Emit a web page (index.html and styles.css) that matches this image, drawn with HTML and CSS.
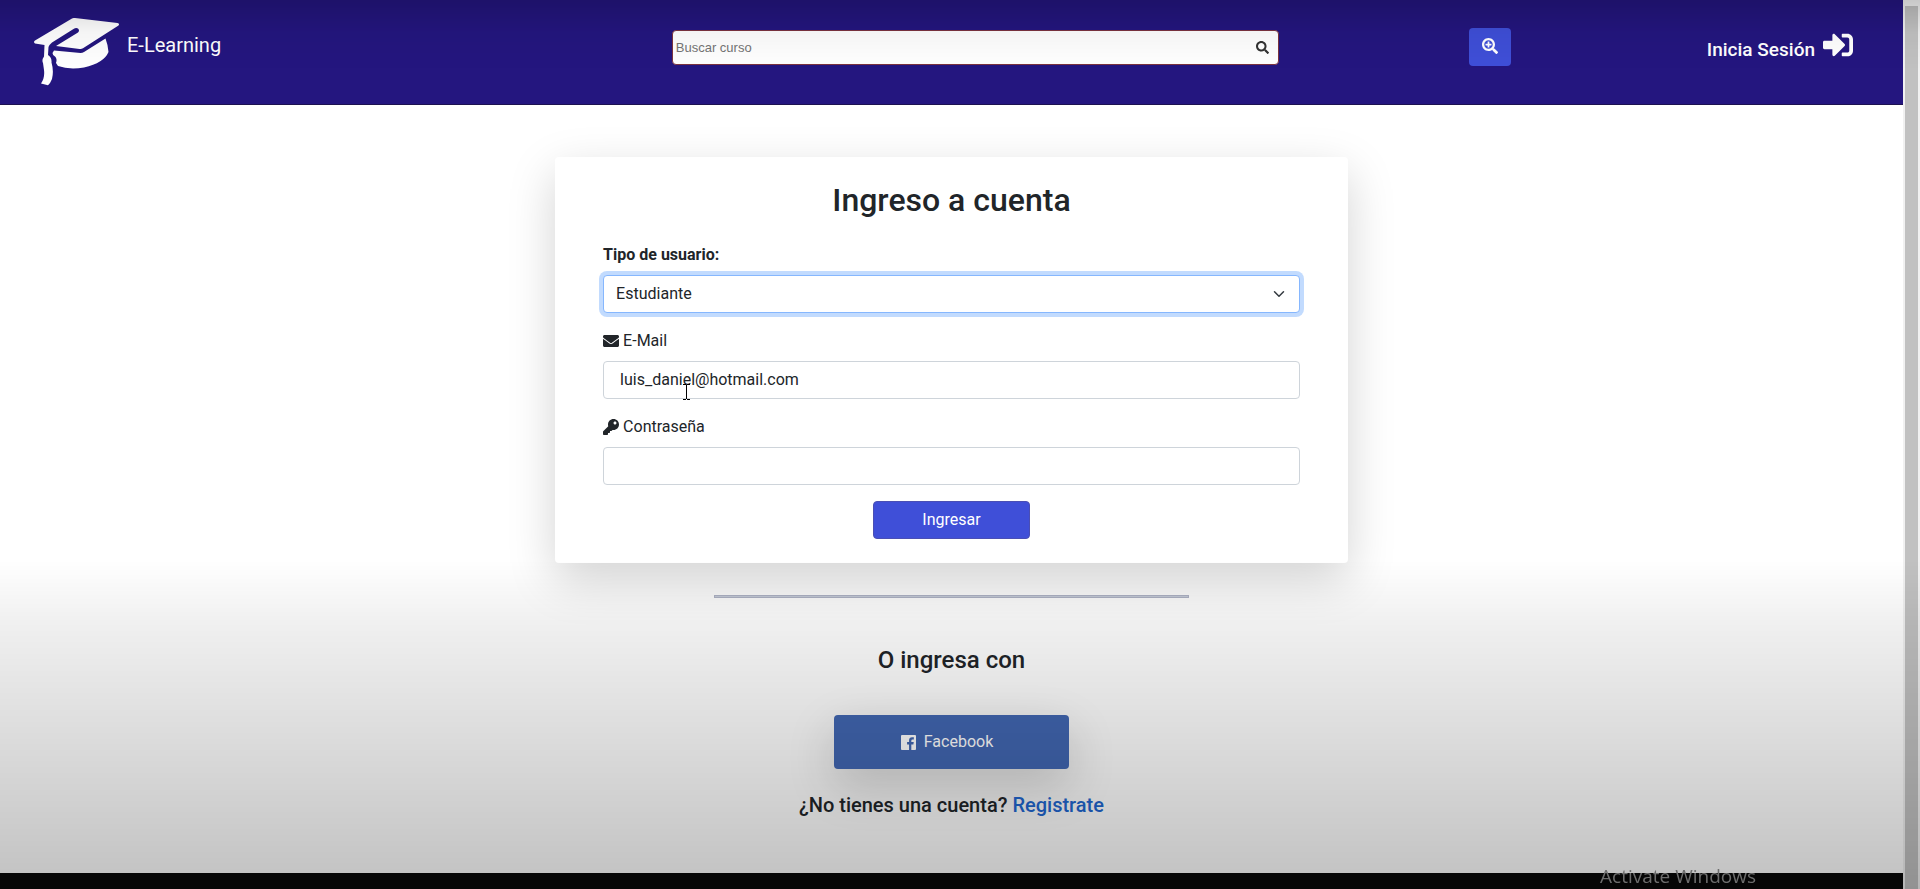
FILE: index.html
```html
<!DOCTYPE html>
<html lang="es">
<head>
<meta charset="utf-8">
<meta name="viewport" content="width=device-width, initial-scale=1">
<title>E-Learning</title>
<link rel="stylesheet" href="styles.css">
</head>
<body>
<div class="page">
  <header class="topbar">
    <a class="brand" href="#">
      <svg class="brand-logo" viewBox="0 0 86 68" aria-hidden="true">
        <path fill="#fff" d="M38 0.500Q39.500-.2 41 0L83.500 5Q86 5.600 84.500 7.500L49 30.300Q47.500 31.300 45.500 31L22 28 44 14.500Q46 12.500 44 10.500 42 9.500 39.500 11L18 24.500Q15.500 26.500 14.500 29L14 37Q18 39.500 17.500 44.500 20 53 18 61Q16.500 65 14 67.200L7 65.500Q11 60 10 52L9 45Q7.500 42 10 38.500L10.500 27 1 25.500Q-1 24 1 22.500Z"/>
        <path fill="#fff" d="M20 32.500L46.500 35Q48.500 35 50 34L71.500 20.500Q74 27 74.500 34 70 45 50 49.500 35 52 24 48L22 45Q23.500 41 21 38.500 18.500 37 18.500 35Z"/>
      </svg>
      <span>E-Learning</span>
    </a>
    <form class="search" role="search">
      <input class="search-input" type="search" placeholder="Buscar curso" aria-label="Buscar curso">
      <svg class="search-icon" viewBox="0 0 512 512" aria-hidden="true"><path fill="#333" d="M505 442.700L405.300 343c-4.500-4.500-10.600-7-17-7H372c27.600-35.300 44-79.700 44-128C416 93.100 322.900 0 208 0S0 93.100 0 208s93.100 208 208 208c48.300 0 92.700-16.400 128-44v16.300c0 6.400 2.500 12.500 7 17l99.700 99.700c9.400 9.400 24.600 9.400 33.900 0l28.300-28.300c9.400-9.400 9.400-24.600.1-34zM208 336c-70.700 0-128-57.200-128-128 0-70.700 57.200-128 128-128 70.700 0 128 57.200 128 128 0 70.700-57.200 128-128 128z"/></svg>
    </form>
    <button class="zoom-button" type="button" aria-label="Buscar">
      <svg viewBox="0 0 512 512" aria-hidden="true"><path fill="#fff" d="M304 192v32c0 6.600-5.400 12-12 12h-56v56c0 6.600-5.400 12-12 12h-32c-6.600 0-12-5.400-12-12v-56h-56c-6.600 0-12-5.400-12-12v-32c0-6.600 5.400-12 12-12h56v-56c0-6.600 5.400-12 12-12h32c6.600 0 12 5.400 12 12v56h56c6.600 0 12 5.400 12 12zm201 284.700L476.700 505c-9.400 9.400-24.600 9.400-33.900 0L343 405.300c-4.500-4.500-7-10.600-7-17V372c-35.300 27.600-79.700 44-128 44C93.100 416 0 322.900 0 208S93.100 0 208 0s208 93.100 208 208c0 48.300-16.400 92.700-44 128h16.300c6.400 0 12.500 2.500 17 7l99.700 99.700c9.300 9.400 9.300 24.600 0 34zM344 208c0-75.200-60.800-136-136-136S72 132.800 72 208s60.800 136 136 136 136-60.800 136-136z"/></svg>
    </button>
    <a class="login-link" href="#">
      <span>Inicia Sesión</span>
      <svg viewBox="0 0 512 512" aria-hidden="true"><path fill="#fff" d="M416 448h-84c-6.600 0-12-5.400-12-12v-40c0-6.600 5.400-12 12-12h84c17.700 0 32-14.300 32-32V160c0-17.700-14.300-32-32-32h-84c-6.600 0-12-5.400-12-12V76c0-6.600 5.400-12 12-12h84c53 0 96 43 96 96v192c0 53-43 96-96 96zm-47-209L201 71c-15-15-41-4.500-41 17v96H24c-13.300 0-24 10.700-24 24v96c0 13.300 10.700 24 24 24h136v96c0 21.500 26 32 41 17l168-168c9.300-9.400 9.300-24.600 0-34z"/></svg>
    </a>
  </header>

  <main class="content">
    <form class="card">
      <h1 class="card-title">Ingreso a cuenta</h1>
      <div class="field">
        <label class="label-strong" for="tipo">Tipo de usuario:</label>
        <div class="control">
          <select class="select" id="tipo"><option>Estudiante</option><option>Profesor</option></select>
          <svg class="chevron" viewBox="0 0 16 16" aria-hidden="true"><path fill="none" stroke="#343a40" stroke-width="2" stroke-linecap="round" stroke-linejoin="round" d="M2 5l6 6 6-6"/></svg>
        </div>
      </div>
      <div class="field">
        <label for="email"><svg class="label-icon" viewBox="0 0 512 512" aria-hidden="true"><path fill="#212529" d="M502.300 190.800c3.900-3.100 9.700-.2 9.700 4.700V400c0 26.500-21.500 48-48 48H48c-26.500 0-48-21.500-48-48V195.600c0-5 5.700-7.800 9.700-4.700 22.400 17.400 52.100 39.500 154.100 113.600 21.100 15.400 56.700 47.800 92.200 47.600 35.700.3 72-32.800 92.300-47.600 102-74.100 131.600-96.300 154-113.700zM256 320c23.200.4 56.600-29.200 73.400-41.400 132.700-96.300 142.800-104.700 173.400-128.700 5.800-4.500 9.200-11.500 9.200-18.900v-19c0-26.500-21.500-48-48-48H48c-26.500 0-48 21.500-48 48v19c0 7.400 3.400 14.300 9.200 18.900 30.600 23.900 40.700 32.400 173.400 128.700 16.800 12.200 50.200 41.800 73.400 41.400z"/></svg>E-Mail</label>
        <div class="control">
          <input class="input" id="email" type="email" value="luis_daniel@hotmail.com">
          <svg class="pointer" viewBox="0 0 7 16" aria-hidden="true"><path fill="#000" d="M0 0h3v1H0zM4 0h3v1H4zM3 1h1v14H3zM0 15h3v1H0zM4 15h3v1H4z"/></svg>
        </div>
      </div>
      <div class="field">
        <label for="clave"><svg class="label-icon" viewBox="0 0 512 512" aria-hidden="true"><path fill="#212529" d="M512 176.001C512 273.203 433.202 352 336 352c-11.220 0-22.190-1.062-32.827-3.069l-24.012 27.014A23.999 23.999 0 0 1 261.223 384H224v40c0 13.255-10.745 24-24 24h-40v40c0 13.255-10.745 24-24 24H24c-13.255 0-24-10.745-24-24v-78.059c0-6.365 2.529-12.470 7.029-16.971l161.802-161.802C163.108 213.814 160 195.271 160 176 160 78.798 238.797.001 335.999 0 433.488-.001 512 78.511 512 176.001zM336 128c0 26.510 21.490 48 48 48s48-21.490 48-48-21.490-48-48-48-48 21.490-48 48z"/></svg>Contraseña</label>
        <input class="input" id="clave" type="password">
      </div>
      <button class="submit" type="submit">Ingresar</button>
    </form>

    <hr class="divider">

    <section class="social">
      <h2 class="social-title">O ingresa con</h2>
      <button class="facebook" type="button">
        <svg viewBox="0 0 16 16" aria-hidden="true"><path fill="#fff" d="M1 0h14q1 0 1 1v14q0 1-1 1h-4V10h2.200l.4-2.500H11V6q0-1.300 1.300-1.300h1.400V2.500Q12.900 2.300 11.800 2.300 8.600 2.300 8.600 5.500v2H6.500V10h2.100v6H1Q0 16 0 15V1Q0 0 1 0z"/></svg>
        <span>Facebook</span>
      </button>
      <p class="signup">¿No tienes una cuenta? <a href="#">Registrate</a></p>
    </section>
  </main>

  <footer class="footer"></footer>
</div>
<div class="scrollbar" aria-hidden="true"><div class="scrollbar-thumb"></div></div>
<div class="shade" aria-hidden="true"></div>
<div class="watermark">Activate Windows</div>
</body>
</html>
```

FILE: styles.css
```css
* {
  box-sizing: border-box;
}

body {
  margin: 0;
  display: flex;
  min-height: 100vh;
  background: #fff;
  color: #212529;
  font: 400 16px/24px Roboto, "Liberation Sans", sans-serif;
}

input,
select,
button {
  font: inherit;
  color: inherit;
  margin: 0;
}

a {
  text-decoration: none;
}

svg {
  display: block;
  flex: none;
}

.page {
  flex: 1;
  min-width: 0;
  display: flex;
  flex-direction: column;
}

/* Top bar */
.topbar {
  display: grid;
  grid-template-columns: 353fr 319fr 122fr 206fr;
  align-items: start;
  padding-bottom: 18px;
  background: #24167f;
  border-bottom: 1px solid #1d1250;
  color: #fff;
}

.brand {
  display: flex;
  gap: 7px;
  padding: 18px 0 0 34px;
  color: #fff;
  font-size: 20px;
  line-height: 55px;
}

.brand-logo {
  width: 86px;
  height: 68px;
}

.search {
  position: relative;
  padding-top: 30px;
}

.search-input {
  display: block;
  width: 100%;
  height: 35px;
  padding: 1px 3px;
  border: 1px solid #7c3440;
  border-radius: 4px;
  background: #fff;
  appearance: none;
  font: 13px "Liberation Sans", Arial, sans-serif;
}

.search-input::placeholder {
  color: #757575;
}

.search-icon {
  position: absolute;
  top: 41px;
  right: 10px;
  width: 13px;
  height: 13px;
}

.zoom-button {
  justify-self: end;
  margin: 28px 0 0;
  padding: 10px 13px 12px;
  border: 0;
  border-radius: 4px;
  background: #3f4fd8;
}

.zoom-button svg {
  width: 16px;
  height: 16px;
}

.login-link {
  display: flex;
  justify-content: flex-end;
  gap: 8px;
  padding: 30px 50px 0 0;
  color: #fff;
  font-size: 19px;
  font-weight: 500;
  line-height: 40px;
}

.login-link svg {
  width: 30px;
  height: 30px;
}

/* Login card */
.content {
  flex: 1;
  display: flex;
  flex-direction: column;
  align-items: center;
  padding-top: 52px;
}

.card {
  display: flex;
  flex-direction: column;
  gap: 16px;
  width: 41.66%;
  padding: 24px 48px;
  border-radius: 4px;
  background: #fff;
  box-shadow: 0 16px 48px rgba(0, 0, 0, 0.175);
}

.card-title {
  margin: 0 0 8px;
  font-size: 32px;
  font-weight: 500;
  line-height: 38px;
  text-align: center;
}

.field {
  display: flex;
  flex-direction: column;
  gap: 8px;
}

.field label {
  display: flex;
  align-items: center;
  gap: 4px;
}

.label-strong {
  font-weight: 700;
}

.label-icon {
  width: 16px;
  height: 16px;
}

.control {
  position: relative;
}

.select,
.input {
  display: block;
  width: 100%;
  height: 38px;
  border: 1px solid #ced4da;
  border-radius: 4px;
  background: #fff;
  appearance: none;
}

.select {
  padding: 0 36px 0 12px;
  border-color: #86b7fe;
  outline: 0;
  box-shadow: 0 0 0 4px rgba(13, 110, 253, 0.25);
}

.input {
  padding: 0 16px 2px;
}

.chevron {
  position: absolute;
  top: 13px;
  right: 15px;
  width: 12px;
  height: 12px;
}

.pointer {
  position: absolute;
  top: 23px;
  left: 80px;
  width: 7px;
  height: 16px;
  shape-rendering: crispEdges;
}

.submit {
  align-self: center;
  height: 38px;
  padding: 0 48px;
  border: 1px solid #4a4fb4;
  border-radius: 4px;
  background: #3f4fd8;
  color: #fff;
}

.divider {
  width: 25%;
  height: 3px;
  margin: 32px 0 0;
  border: 1px solid #a9aebf;
  background: #bfc5d2;
}

/* Social login */
.social {
  display: flex;
  flex-direction: column;
  align-items: center;
  padding: 48px 0 56px;
}

.social-title {
  margin: 0 0 40px;
  font-size: 24px;
  font-weight: 500;
  line-height: 29px;
}

.facebook {
  display: flex;
  align-items: center;
  gap: 8px;
  height: 54px;
  padding: 0 76px 0 67px;
  border: 0;
  border-radius: 4px;
  background: #4267b2;
  color: #fff;
  box-shadow: 0 16px 48px rgba(0, 0, 0, 0.175);
}

.facebook svg {
  width: 15px;
  height: 15px;
}

.signup {
  margin: 24px 0 0;
  font-size: 20px;
  font-weight: 500;
}

.signup a {
  color: #2166cf;
}

.footer {
  height: 16px;
  background: #080808;
}

/* Window chrome */
.scrollbar {
  display: flex;
  width: 17px;
  padding: 6px 2px 0;
  background: #f1f1f1;
}

.scrollbar-thumb {
  flex: 1;
  background: #c1c1c1;
}

.shade {
  position: fixed;
  inset: 0;
  pointer-events: none;
  background:
    linear-gradient(rgba(0, 0, 0, 0.17), rgba(0, 0, 0, 0.04) 32px, transparent 70px),
    linear-gradient(transparent 63%, rgba(0, 0, 0, 0.06) 70%, rgba(0, 0, 0, 0.245));
}

.watermark {
  position: fixed;
  right: 164px;
  bottom: 0;
  color: #6d6d6d;
  font: 19px/26px "Open Sans", sans-serif;
}
```
